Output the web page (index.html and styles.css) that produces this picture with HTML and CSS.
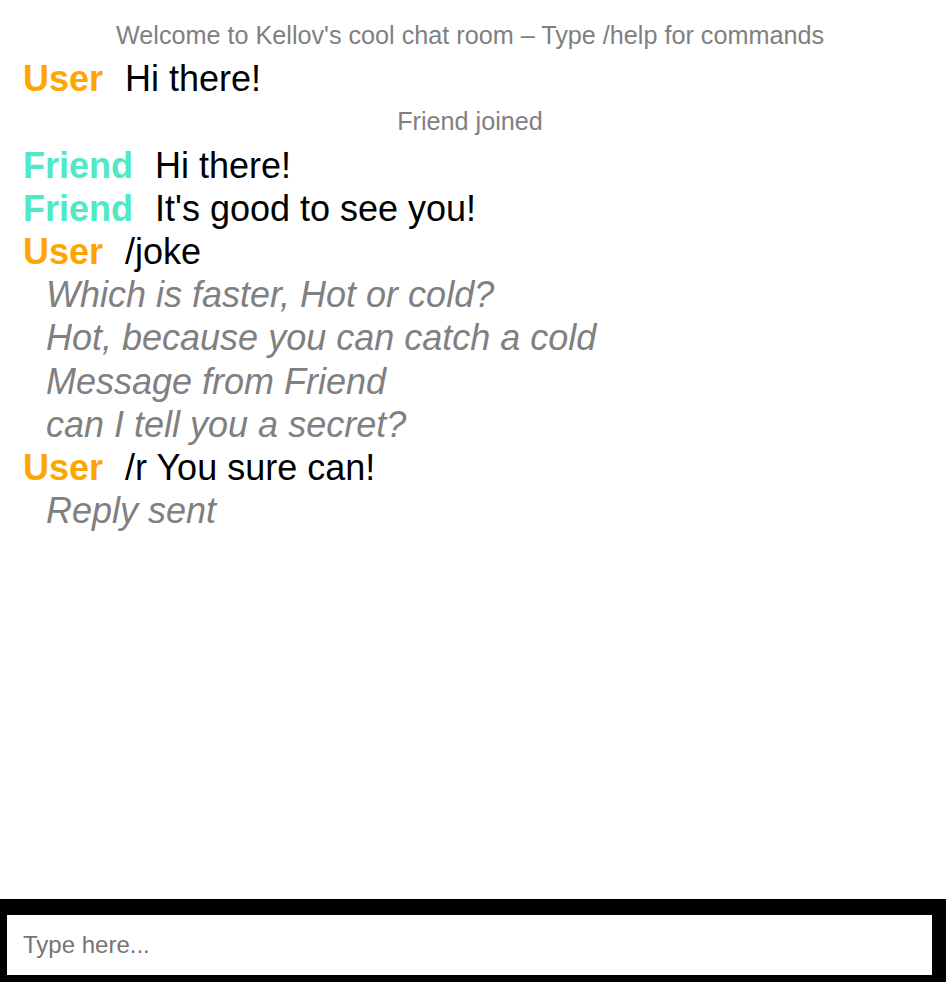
FILE: index.html
```html
<!DOCTYPE html>
<html>
<head>
<meta charset="utf-8">
<title>Chat</title>
<link rel="stylesheet" href="styles.css">
</head>
<body>
<div class="app">
  <div class="messages">
    <div class="line system">Welcome to Kellov's cool chat room – Type /help for commands</div>
    <div class="line"><span class="name user">User</span><span class="text">Hi there!</span></div>
    <div class="line system">Friend joined</div>
    <div class="line"><span class="name friend">Friend</span><span class="text">Hi there!</span></div>
    <div class="line"><span class="name friend">Friend</span><span class="text">It's good to see you!</span></div>
    <div class="line"><span class="name user">User</span><span class="text">/joke</span></div>
    <div class="line info">Which is faster, Hot or cold?</div>
    <div class="line info">Hot, because you can catch a cold</div>
    <div class="line info">Message from Friend</div>
    <div class="line info">can I tell you a secret?</div>
    <div class="line"><span class="name user">User</span><span class="text">/r You sure can!</span></div>
    <div class="line info">Reply sent</div>
  </div>
  <div class="footer">
    <input class="input" type="text" placeholder="Type here...">
  </div>
</div>
</body>
</html>
```

FILE: styles.css
```css
html, body {
  margin: 0;
  padding: 0;
  background: #ffffff;
}

body {
  font-family: "Liberation Sans", Arial, sans-serif;
}

.app {
  display: flex;
  flex-direction: column;
  height: 100vh;
}

.messages {
  flex: 1;
  padding: 14px 6px 0 0;
  font-size: 36px;
  line-height: 43.2px;
  color: #000000;
}

.line {
  height: 43.2px;
  padding-left: 23px;
  white-space: nowrap;
}

.system {
  padding-left: 0;
  text-align: center;
  font-size: 25.2px;
  color: #808080;
}

.info {
  padding-left: 46px;
  font-style: italic;
  color: #808080;
}

.name {
  font-weight: bold;
  margin-right: 22px;
}

.user {
  color: #ffa500;
}

.friend {
  color: #50e8c6;
}

.footer {
  background: #000000;
  padding: 16px 14px 7px 7px;
  display: flex;
}

.input {
  flex: 1;
  height: 60px;
  box-sizing: border-box;
  border: none;
  outline: none;
  padding: 0 16px;
  margin: 0;
  font-family: "Liberation Sans", Arial, sans-serif;
  font-size: 24px;
  color: #000000;
  background: #ffffff;
}

.input::placeholder {
  color: #757575;
}
```
